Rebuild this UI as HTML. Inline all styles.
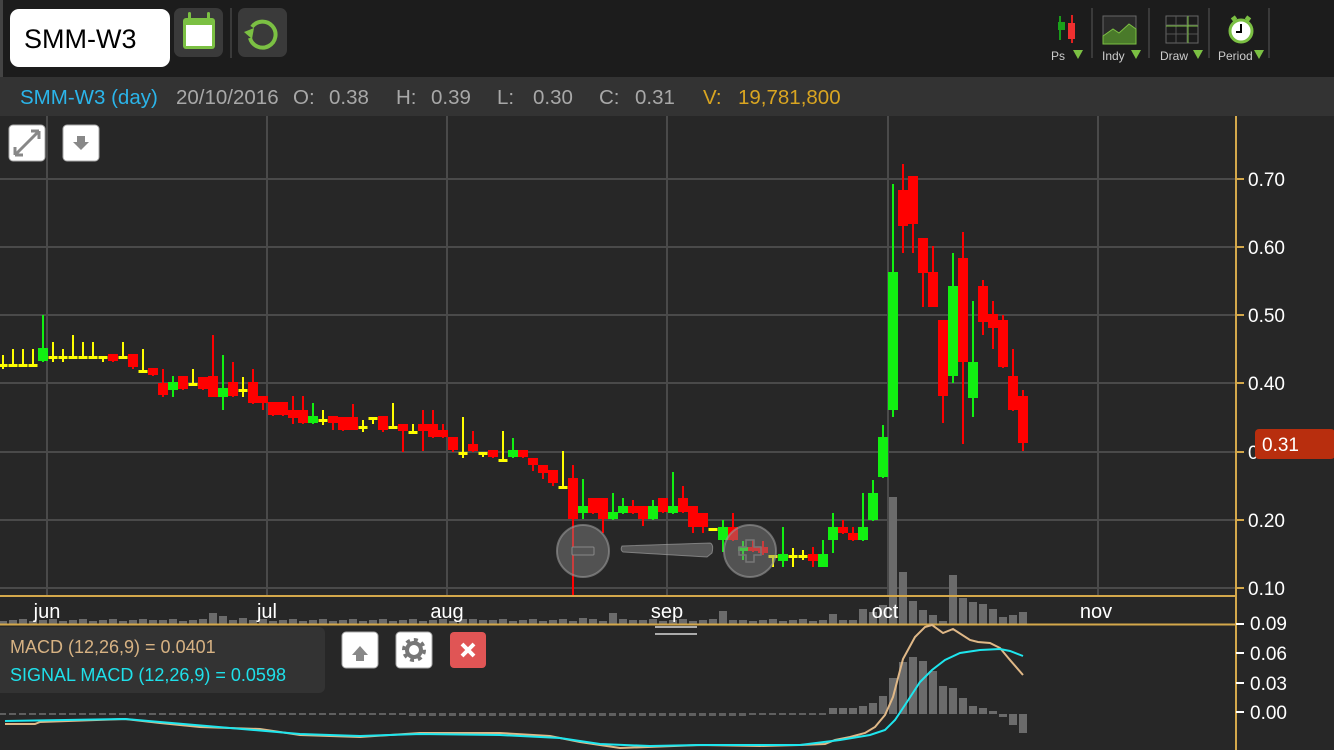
<!DOCTYPE html>
<html><head><meta charset="utf-8"><style>
html,body{margin:0;padding:0;background:#272727;width:1334px;height:750px;overflow:hidden;font-family:"Liberation Sans",sans-serif}
svg{position:absolute;left:0;top:0}
</style></head><body>
<svg id="s" width="1334" height="750" viewBox="0 0 1334 750" xmlns="http://www.w3.org/2000/svg" font-family="Liberation Sans, sans-serif">
<rect x="0" y="0" width="1334" height="750" fill="#272727"/>
<rect x="0" y="0" width="1334" height="77" fill="#1c1c1c"/>
<rect x="0" y="77" width="1334" height="39" fill="#333333"/>
<rect x="0" y="0" width="3" height="77" fill="#444"/>
<rect x="10" y="9" width="160" height="58" rx="9" fill="#fff"/>
<text x="24" y="48" font-size="27" fill="#000">SMM-W3</text>
<rect x="174" y="8" width="49" height="49" rx="7" fill="#3a3a3a"/>
<rect x="183" y="18" width="32" height="31" rx="3" fill="#7bc043"/>
<rect x="186" y="25" width="26" height="21" fill="#fff"/>
<rect x="188" y="12" width="3" height="9" rx="1.5" fill="#7bc043"/>
<rect x="207" y="12" width="3" height="9" rx="1.5" fill="#7bc043"/>
<rect x="230" y="8" width="2" height="50" fill="#3a3a3a"/>
<rect x="238" y="8" width="49" height="49" rx="7" fill="#3a3a3a"/>
<path d="M252 27 A13 13 0 1 1 250 38" fill="none" stroke="#7bc043" stroke-width="4"/>
<path d="M244 32 L254 28 L252 39 Z" fill="#7bc043"/>
<rect x="1059" y="16" width="2" height="24" fill="#1a9a1a"/><rect x="1058" y="22" width="7" height="8" fill="#1aa01a"/>
<rect x="1071" y="15" width="2" height="28" fill="#e02020"/><rect x="1068" y="23" width="7" height="16" fill="#f03030"/>
<text x="1051" y="60" font-size="12" fill="#ccc">Ps</text><path d="M1073 50 L1083 50 L1078 59Z" fill="#7bc043"/>
<rect x="1091" y="8" width="2" height="50" fill="#3a3a3a"/>
<rect x="1103" y="16" width="33" height="28" fill="#2a2a2a" stroke="#666" stroke-width="1"/>
<path d="M1103 36 L1113 29 L1119 33 L1129 24 L1136 29 L1136 44 L1103 44Z" fill="#4a7a2a" stroke="#7bc043"/>
<text x="1102" y="60" font-size="12" fill="#ccc">Indy</text><path d="M1131 50 L1141 50 L1136 59Z" fill="#7bc043"/>
<rect x="1148" y="8" width="2" height="50" fill="#3a3a3a"/>
<rect x="1166" y="16" width="32" height="27" fill="none" stroke="#666"/>
<path d="M1166 25 H1198 M1166 34 H1198 M1176 16 V43 M1187 16 V43" stroke="#555"/>
<path d="M1166 26 H1198 M1188 16 V43" stroke="#7bc043" stroke-width="1"/>
<text x="1160" y="60" font-size="12" fill="#ccc">Draw</text><path d="M1193 50 L1203 50 L1198 59Z" fill="#7bc043"/>
<rect x="1208" y="8" width="2" height="50" fill="#3a3a3a"/>
<circle cx="1241" cy="31" r="11" fill="#fff" stroke="#7bc043" stroke-width="3"/>
<path d="M1232 20 L1236 17 M1250 20 L1246 17" stroke="#7bc043" stroke-width="4"/>
<path d="M1241 24 V32 H1236" stroke="#000" stroke-width="2" fill="none"/>
<text x="1218" y="60" font-size="12" fill="#ccc">Period</text><path d="M1254 50 L1264 50 L1259 59Z" fill="#7bc043"/>
<rect x="1268" y="8" width="2" height="50" fill="#3a3a3a"/>
<g font-size="20.5">
<text x="20" y="104" fill="#2bb5ea">SMM-W3 (day)</text>
<text x="176" y="104" fill="#a8a8a8">20/10/2016</text>
<text x="293" y="104" fill="#a8a8a8">O:</text><text x="329" y="104" fill="#a8a8a8">0.38</text>
<text x="396" y="104" fill="#a8a8a8">H:</text><text x="431" y="104" fill="#a8a8a8">0.39</text>
<text x="497" y="104" fill="#a8a8a8">L:</text><text x="533" y="104" fill="#a8a8a8">0.30</text>
<text x="599" y="104" fill="#a8a8a8">C:</text><text x="635" y="104" fill="#a8a8a8">0.31</text>
<text x="703" y="104" fill="#d9a521">V:</text><text x="738" y="104" fill="#d9a521">19,781,800</text>
</g>
<g stroke="#4a4a4a" stroke-width="2">
<path d="M0 179H1236M0 247H1236M0 315H1236M0 383H1236M0 452H1236M0 520H1236M0 588H1236"/>
<path d="M47 116V596M267 116V596M447 116V596M667 116V596M888 116V596M1098 116V596"/>
</g>
<g id="vol"></g>
<g id="hist"></g>
<g id="cnd"></g>
<path d="M1236 116V750" stroke="#d4a84b" stroke-width="2"/>
<path d="M0 596H1236M0 624.5H1236" stroke="#d4a84b" stroke-width="2"/>
<g stroke="#d4a84b" stroke-width="2"><path d="M1236 179h8M1236 247h8M1236 315h8M1236 383h8M1236 452h8M1236 520h8M1236 588h8"/></g>
<g stroke="#fff" stroke-width="2"><path d="M1236 624h8M1236 653h8M1236 683h8M1236 712h8"/></g>
<g font-size="19" fill="#fff">
<text x="1248" y="186">0.70</text><text x="1248" y="254">0.60</text><text x="1248" y="322">0.50</text><text x="1248" y="390">0.40</text><text x="1248" y="459">0</text><text x="1248" y="527">0.20</text><text x="1248" y="595">0.10</text>
<text x="1250" y="630">0.09</text><text x="1250" y="660">0.06</text><text x="1250" y="690">0.03</text><text x="1250" y="719">0.00</text>
</g>
<rect x="1255" y="429" width="80" height="30" rx="4" fill="#b82e0e"/>
<text x="1262" y="451" font-size="19" fill="#fff">0.31</text>
<g font-size="20" fill="#fff" text-anchor="middle">
<text x="47" y="618">jun</text><text x="267" y="618">jul</text><text x="447" y="618">aug</text><text x="667" y="618">sep</text><text x="885" y="618">oct</text><text x="1096" y="618">nov</text>
</g>
<path d="M655 627H697M655 634H697" stroke="#ccc" stroke-width="2" opacity="0.8"/>
<polyline fill="none" stroke="#e0b887" stroke-width="2" points="5,724 35,724 40,722 125,719 160,723 200,727 260,729 300,735 360,737 420,733 500,733 550,736 580,742 620,748 700,745 760,746 800,745 825,744 835,740 850,737 865,733 875,727 885,715 893,697 903,659 915,637 925,627 932,625 943,633 953,629 970,640 978,642 990,643 1000,648 1010,660 1023,675"/>
<polyline fill="none" stroke="#1ee6ee" stroke-width="2" points="5,721 125,719 160,722 300,734 360,736 420,734 500,735 560,738 600,744 650,746 700,745 800,745 840,740 870,735 885,730 895,720 905,705 920,682 932,670 945,660 960,653 980,650 1000,649 1010,651 1023,656"/>
<rect x="9" y="125" width="36" height="36" rx="4" fill="#fff" stroke="#aaa"/>
<path d="M15 155 L39 131 M15 155 V147 M15 155 H23 M39 131 V139 M39 131 H31" stroke="#888" stroke-width="3" fill="none"/>
<rect x="63" y="125" width="36" height="36" rx="4" fill="#fff" stroke="#aaa"/>
<path d="M77 136 H85 V142 H89 L81 150 L73 142 H77Z" fill="#888"/>
<rect x="-8" y="627" width="333" height="66" rx="6" fill="#333"/>
<text x="10" y="653" font-size="18" fill="#d7b283">MACD (12,26,9) = 0.0401</text>
<text x="10" y="681" font-size="18" fill="#1fe0ea">SIGNAL MACD (12,26,9) = 0.0598</text>
<rect x="342" y="632" width="36" height="36" rx="4" fill="#fff" stroke="#aaa"/>
<path d="M356 661 H364 V655 H368 L360 646 L352 655 H356Z" fill="#888"/>
<rect x="396" y="632" width="36" height="36" rx="4" fill="#fff" stroke="#aaa"/>
<circle cx="414" cy="650" r="9" fill="none" stroke="#777" stroke-width="6" stroke-dasharray="3.5 3.5"/>
<circle cx="414" cy="650" r="7" fill="none" stroke="#777" stroke-width="4"/>
<rect x="450" y="632" width="36" height="36" rx="4" fill="#e05555"/>
<path d="M462 644 L474 656 M474 644 L462 656" stroke="#fff" stroke-width="4"/>
<circle cx="583" cy="551" r="26" fill="#888" fill-opacity="0.45" stroke="#999" stroke-opacity="0.6" stroke-width="2"/>
<rect x="572" y="547" width="22" height="8" rx="1" fill="#555" stroke="#888"/>
<path d="M622 546 L710 543 Q714 544 712 553 L707 557 L623 552 Q620 550 622 546Z" fill="#888" fill-opacity="0.5" stroke="#aaa" stroke-opacity="0.6"/>
<circle cx="750" cy="551" r="26" fill="#888" fill-opacity="0.45" stroke="#999" stroke-opacity="0.6" stroke-width="2"/>
<path d="M746 540 h8 v7 h7 v8 h-7 v7 h-8 v-7 h-7 v-8 h7z" fill="none" stroke="#777" stroke-width="1.5"/>
</svg>
<script>
var NS="http://www.w3.org/2000/svg";
function el(g,t,a){var e=document.createElementNS(NS,t);for(var k in a)e.setAttribute(k,a[k]);document.getElementById(g).appendChild(e);}
var C=[
['y',355,365,365,369],['y',349,365,365,366],['y',349,365,365,366],['y',349,365,365,366],['g',315,348,361,362],
['y',342,357,357,362],['y',349,357,357,362],['y',335,357,357,358],['y',342,357,357,358],['y',342,357,357,358],
['y',357,357,357,362],['r',354,354,361,362],['y',342,357,357,358],['r',354,354,367,369],['y',349,371,371,372],
['r',368,368,375,376],['r',369,383,395,397],['g',376,382,390,397],['r',376,376,389,390],['y',369,384,384,385],
['r',377,377,389,390],['r',335,376,397,397],['g',355,388,397,410],['r',362,382,396,397],['y',377,390,390,397],
['r',369,382,403,404],['r',396,396,403,410],['r',402,402,415,416],['r',402,402,415,416],['r',396,410,418,424],
['r',396,410,423,424],['g',403,416,423,424],['y',410,420,420,425],['r',416,416,423,430],['r',417,417,430,431],
['r',404,417,430,430],['y',420,427,427,432],['y',418,418,418,424],['r',416,416,430,432],['y',403,427,427,428],
['r',424,424,431,452],['y',424,432,432,433],['r',410,424,431,451],['r',410,424,437,438],['r',424,430,437,438],
['r',437,437,450,452],['y',417,453,453,458],['r',431,444,451,452],['y',453,453,453,457],['r',450,450,457,458],
['y',431,460,460,461],['g',438,450,457,458],['r',450,450,457,458],['r',458,458,465,471],['r',465,465,473,479],
['r',470,470,483,486],['y',451,487,487,488],['r',465,478,519,595],['g',479,506,513,519],['r',498,498,513,514],
['r',498,498,519,533],['g',493,512,519,520],['g',498,506,513,514],['r',500,506,513,514],['r',506,506,519,526],
['g',500,506,519,520],['r',498,498,512,513],['g',472,506,513,514],['r',486,498,512,513],['r',506,506,527,533],
['r',513,513,527,533],['y',529,529,529,530],['g',520,527,540,552],['r',513,527,540,541],['g',541,547,551,560],
['r',540,547,551,552],['r',541,547,553,555],['y',556,556,556,567],['g',527,554,561,567],['y',548,556,556,567],
['y',550,556,556,560],['r',547,554,561,567],['g',540,554,567,567],['g',513,527,540,553],['r',520,527,533,534],
['r',527,533,540,541],['g',493,527,540,541],['g',480,493,520,521],['g',425,437,477,478],['g',184,272,410,417],
['r',164,190,226,253],['r',176,176,224,253],['r',238,238,273,307],['r',246,272,307,307],['r',320,320,396,423],
['g',253,286,376,383],['r',232,258,362,444],['g',301,362,398,417],['r',280,286,322,335],['r',301,314,328,349],
['r',315,320,367,368],['r',349,376,410,411],['r',390,396,443,451]
];
var col={g:'#11f011',r:'#ff0000',y:'#ffff00'};
C.forEach(function(c,i){var x=3+10*i,f=col[c[0]];
 el('cnd','rect',{x:x-1,y:c[1],width:2,height:Math.max(1,c[4]-c[1]),fill:f});
 if(c[0]=='y'){el('cnd','rect',{x:x-4.5,y:c[2]-1,width:9,height:3,fill:f});}
 else el('cnd','rect',{x:x-5,y:c[2],width:10,height:Math.max(2,c[3]-c[2]),fill:f});
});
var V={};[[213,613],[223,616],[243,618],[562,613],[573,621],[583,618],[613,613],[723,611],[833,614],[843,620],[853,620],[863,609],[873,612],[883,605],[893,497],[903,572],[913,601],[923,610],[933,615],[943,621],[953,575],[963,598],[973,602],[983,604],[993,609],[1003,617],[1013,615],[1023,612],[153,620],[233,620],[463,619],[483,620],[633,620],[743,620]].forEach(function(p){V[p[0]]=p[1];});
for(var i=0;i<103;i++){var x=3+10*i,t=V[x]||(621-(i*7%3));el('vol','rect',{x:x-4,y:t,width:8,height:624-t,fill:'#6b6b6b'});}
var H={833:708,843:708,853:708,863:706,873:703,883:696,893:678,903:662,913:657,923:661,933:671,943:686,953:688,963:698,973:706,983:708,993:711};
var N={1003:717,1013:725,1023:733};
for(var i=0;i<103;i++){var x=3+10*i;
 if(H[x])el('hist','rect',{x:x-4,y:H[x],width:8,height:714-H[x],fill:'#6b6b6b'});
 else if(N[x])el('hist','rect',{x:x-4,y:714,width:8,height:N[x]-714,fill:'#6b6b6b'});
 else el('hist','rect',{x:x-4,y:713,width:7,height:i>40&&i<75?3:2,fill:'#5f5f5f'});}
</script>
</body></html>
